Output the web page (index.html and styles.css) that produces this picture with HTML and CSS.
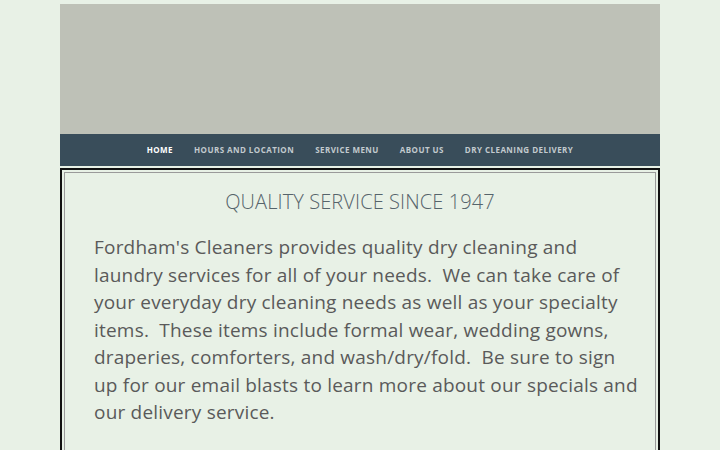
FILE: index.html
```html
<!DOCTYPE html>
<html>
<head>
<meta charset="utf-8">
<link rel="stylesheet" href="styles.css">
</head>
<body>
<div class="page">
  <div class="banner"></div>
  <nav class="nav">
    <a class="nav-item active">Home</a>
    <a class="nav-item">Hours and Location</a>
    <a class="nav-item">Service Menu</a>
    <a class="nav-item">About Us</a>
    <a class="nav-item">Dry Cleaning Delivery</a>
  </nav>
  <div class="frame">
    <div class="frame-inner">
      <h2 class="title">QUALITY SERVICE SINCE 1947</h2>
      <p class="text">Fordham's Cleaners provides quality dry cleaning and laundry services for all of your needs.&nbsp; We can take care of your everyday dry cleaning needs as well as your specialty items.&nbsp; These items include formal wear, wedding gowns, draperies, comforters, and wash/dry/fold.&nbsp; Be sure to sign up for our email blasts to learn more about our specials and our delivery service.</p>
    </div>
  </div>
</div>
</body>
</html>
```
FILE: styles.css
```css
html, body {
  margin: 0;
  padding: 0;
  background: #e8f1e6;
}
body {
  font-family: "Open Sans", "Liberation Sans", sans-serif;
}
.page {
  width: 600px;
  margin: 0 auto;
  padding-top: 4px;
}
.banner {
  height: 130px;
  background: #bec1b7;
}
.nav {
  height: 32px;
  background: #394d5a;
  display: flex;
  justify-content: center;
  align-items: center;
  gap: 21px;
  margin-bottom: 2px;
}
.nav-item {
  font-size: 8px;
  font-weight: 700;
  letter-spacing: 0.45px;
  text-transform: uppercase;
  color: #c2cace;
  padding-bottom: 1px;
}
.nav-item.active {
  color: #ffffff;
}
.frame {
  border: 2px solid #111;
  padding: 2px;
  height: 290px;
}
.frame-inner {
  border: 1px solid #9a9a9a;
  height: 100%;
  box-sizing: border-box;
  padding: 0 15px;
}
.title {
  margin: 15px 0 0;
  text-align: center;
  font-size: 20px;
  font-weight: 300;
  color: #56646b;
  letter-spacing: 0.1px;
}
.text {
  margin: 19px 0 0;
  padding-left: 14px;
  font-size: 19px;
  line-height: 27.5px;
  color: #5a5a5a;
  letter-spacing: 0.2px;
}
```
